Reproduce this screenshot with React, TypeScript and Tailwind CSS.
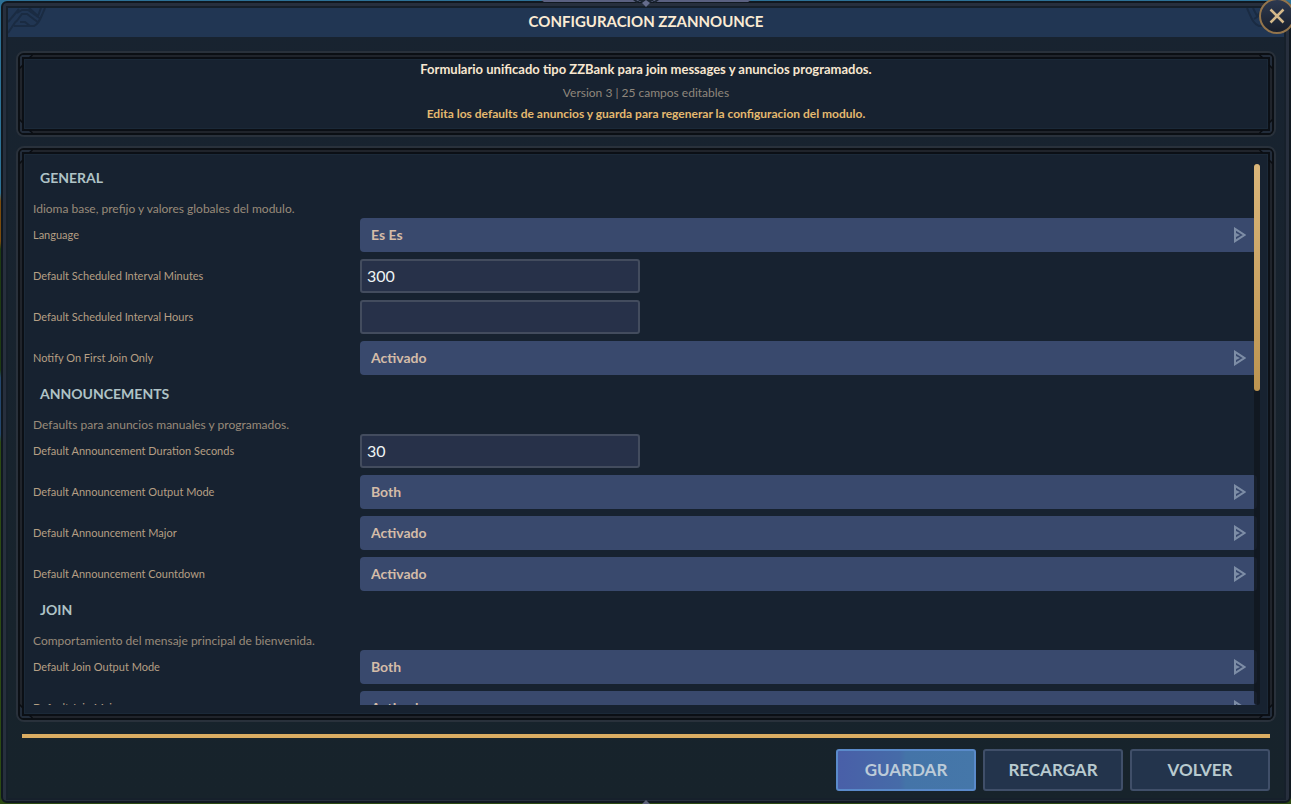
import React, { useId, useRef, useState } from 'react';

type Field = {
  label: string;
  kind: 'select' | 'text';
  value: string;
};

type Section = {
  title: string;
  description: string;
  fields: Field[];
};

const sections: Section[] = [
  {
    title: 'GENERAL',
    description: 'Idioma base, prefijo y valores globales del modulo.',
    fields: [
      { label: 'Language', kind: 'select', value: 'Es Es' },
      { label: 'Default Scheduled Interval Minutes', kind: 'text', value: '300' },
      { label: 'Default Scheduled Interval Hours', kind: 'text', value: '' },
      { label: 'Notify On First Join Only', kind: 'select', value: 'Activado' },
    ],
  },
  {
    title: 'ANNOUNCEMENTS',
    description: 'Defaults para anuncios manuales y programados.',
    fields: [
      { label: 'Default Announcement Duration Seconds', kind: 'text', value: '30' },
      { label: 'Default Announcement Output Mode', kind: 'select', value: 'Both' },
      { label: 'Default Announcement Major', kind: 'select', value: 'Activado' },
      { label: 'Default Announcement Countdown', kind: 'select', value: 'Activado' },
    ],
  },
  {
    title: 'JOIN',
    description: 'Comportamiento del mensaje principal de bienvenida.',
    fields: [
      { label: 'Default Join Output Mode', kind: 'select', value: 'Both' },
      { label: 'Default Join Major', kind: 'select', value: 'Activado' },
    ],
  },
];

const Corner: React.FC<{ className: string }> = ({ className }) => (
  <svg className={`absolute pointer-events-none ${className}`} width="18" height="18" viewBox="0 0 18 18" fill="none">
    <path d="M2 14V4l2-2h10l-2 2H4v8z" fill="#222c3a" />
    <path d="M1.5 15.5L5 12M11.5 4.5L14.5 2" stroke="#0a0d12" strokeWidth="1.5" />
  </svg>
);

const Panel: React.FC<{ className?: string; children: React.ReactNode }> = ({ className = '', children }) => (
  <div className={`relative flex flex-col rounded-lg border-2 border-[#29313b] ${className}`}>
    <div className="flex min-h-0 flex-1 flex-col rounded-md border-2 border-[#0b0f14] bg-[#20242b] p-[2px]">
      <div className="flex min-h-0 flex-1 flex-col border-2 border-[#0b0f15] bg-[#172230]">
        <div className="flex min-h-0 flex-1 flex-col border border-[#1b2938]">{children}</div>
      </div>
    </div>
    <Corner className="left-0 top-0" />
    <Corner className="right-0 top-0 -scale-x-100" />
    <Corner className="bottom-0 left-0 -scale-y-100" />
    <Corner className="bottom-0 right-0 -scale-100" />
  </div>
);

const ArrowIcon: React.FC = () => (
  <svg className="pointer-events-none absolute right-[11px] top-1/2 -translate-y-1/2" width="13" height="16" viewBox="0 0 13 16" fill="none">
    <path d="M2 1.8v12.4L11.4 8z" stroke="#7d8da6" strokeWidth="2" />
    <path d="M3 6l4 2-4 2z" fill="#7d8da6" />
  </svg>
);

const FieldRow: React.FC<{ field: Field }> = ({ field }) => {
  const id = useId();

  return (
    <div className="mb-[7px] flex items-center">
      <label htmlFor={id} className="w-[327px] shrink-0 text-[11px] text-[#b59f84]">
        {field.label}
      </label>
      {field.kind === 'select' ? (
        <div className="relative flex-1">
          <select
            id={id}
            defaultValue={field.value}
            className="block h-[34px] w-full appearance-none rounded bg-[#39496d] px-[11px] text-sm font-bold text-[#d4bca8] outline-none"
          >
            <option>{field.value}</option>
          </select>
          <ArrowIcon />
        </div>
      ) : (
        <input
          id={id}
          type="text"
          defaultValue={field.value}
          className="block h-[34px] w-[280px] rounded-[3px] border-2 border-[#434c5e] bg-[#273149] px-[5px] pb-[2px] text-base text-[#eef4f4] outline-none"
        />
      )}
    </div>
  );
};

const FooterButton: React.FC<{ primary?: boolean; children: React.ReactNode }> = ({ primary, children }) => (
  <button
    type="button"
    className={`h-[42px] w-[140px] rounded-[3px] border-2 text-[17px] font-bold ${
      primary
        ? 'border-[#5a8aca] bg-[linear-gradient(90deg,#495fa8,#466ba8_45%,#4474a8_50%,#4577a9)] text-[#bccbd8]'
        : 'border-[#404f69] bg-[#23344c] text-[#b8cacf]'
    }`}
  >
    {children}
  </button>
);

export default function App() {
  const listRef = useRef<HTMLDivElement>(null);
  const [progress, setProgress] = useState(0);

  const handleScroll = () => {
    const el = listRef.current;
    if (!el) {
      return;
    }
    const max = el.scrollHeight - el.clientHeight;
    setProgress(max > 0 ? el.scrollTop / max : 0);
  };

  return (
    <div className="relative h-screen overflow-hidden bg-[linear-gradient(#2d7196_0_24%,#7a4a0c_25%_30%,#1d3a12_31%_46%,#23456b_47%_54%,#2c4a12_55%)] py-px pl-px font-[Lato,sans-serif]">
      <div className="flex h-full flex-col rounded-md border-2 border-[#101820] bg-[#272f3d] p-[3px] pb-px">
        <div className="flex min-h-0 flex-1 flex-col border-2 border-[#16202b] bg-linear-to-b from-[#182330] to-[#17232b]">
          <header className="relative flex h-[29px] shrink-0 items-center justify-center bg-[#213653] pb-[2px]">
            <svg className="absolute left-0 top-0" width="40" height="29" viewBox="0 0 40 29" fill="none" stroke="#1a2b42" strokeWidth="2">
              <path d="M0 25L8 13M6 18h20c5-2 7-9 11-18M0 14L11 1M8 14l6-8h5l12 9M12 14h5l5 4M9 5l5-3h6l13 9M21 0l9 8 3-8" />
            </svg>
            <svg className="absolute right-0 top-0" width="40" height="29" viewBox="0 0 40 29" fill="none" stroke="#1a2b42" strokeWidth="2">
              <path d="M3 0c4 9 6 16 12 18h20M9 0l4 8 6-7M10 11l12-8" />
            </svg>
            <h1 className="text-[15px] font-bold text-[#fbebd3]">CONFIGURACION ZZANNOUNCE</h1>
          </header>

          <main className="flex min-h-0 flex-1 flex-col px-2 pt-[14px]">
            <Panel className="h-[86px] shrink-0 text-center">
              <p className="text-[13px] leading-[18px] font-bold text-[#f8e7d0]">
                Formulario unificado tipo ZZBank para join messages y anuncios programados.
              </p>
              <p className="mt-[6px] text-xs leading-[18px] text-[#8f877c]">Version 3 | 25 campos editables</p>
              <p className="mt-[3px] text-xs leading-[18px] font-bold text-[#e4b96f]">
                Edita los defaults de anuncios y guarda para regenerar la configuracion del modulo.
              </p>
            </Panel>

            <Panel className="mt-[9px] min-h-0 flex-1">
              <div className="relative mb-2 mt-[9px] mr-[7px] ml-2 min-h-0 flex-1">
                <div ref={listRef} onScroll={handleScroll} className="h-full overflow-y-auto pt-[2px] pr-[3px] [scrollbar-width:none]">
                  {sections.map((section) => (
                    <section key={section.title}>
                      <h2 className="pl-[7px] text-sm leading-6 font-bold text-[#afc3c6]">{section.title}</h2>
                      <p className="mt-[10px] text-xs leading-[18px] text-[#998b7a]">{section.description}</p>
                      {section.fields.map((field) => (
                        <FieldRow key={field.label} field={field} />
                      ))}
                    </section>
                  ))}
                </div>
                <div className="absolute inset-y-0 right-0 w-[6px] rounded-b bg-[#10161f]/85">
                  <div
                    className="relative h-[42%] rounded-full bg-linear-to-b from-[#dab67a] to-[#bd9450]"
                    style={{ top: `${progress * 58}%` }}
                  />
                </div>
              </div>
            </Panel>
          </main>

          <footer className="px-[14px] pt-3 pb-[7px]">
            <div className="h-1 bg-[#daac62]" />
            <div className="mt-[11px] flex justify-end gap-[7px]">
              <FooterButton primary>GUARDAR</FooterButton>
              <FooterButton>RECARGAR</FooterButton>
              <FooterButton>VOLVER</FooterButton>
            </div>
          </footer>
        </div>
      </div>

      {/* frame ornaments over the top and bottom edges */}
      <svg className="absolute left-1/2 top-0 -translate-x-1/2" width="214" height="8" viewBox="0 0 214 8">
        <path d="M2 0h210l-3 2H5z" fill="#5a6080" />
        <path d="M94 0h26l-4 3-3-2-6 6-6-6-3 2z" fill="#1b2532" />
        <path d="M107 0l4 3-4 4-4-4z" fill="#656c8c" />
        <path d="M97 0h3l-1 1zM114 0h3l-2 1z" fill="#656c8c" />
      </svg>
      <svg className="absolute bottom-0 left-1/2 -translate-x-1/2" width="8" height="4" viewBox="0 0 8 4">
        <path d="M4 0l4 4H0z" fill="#5c6178" />
      </svg>

      <button type="button" aria-label="Cerrar" className="absolute -right-1 -top-[2px] flex size-9 items-center justify-center rounded-full border-2 border-[#93744b] bg-linear-to-b from-[#2d3950] to-[#191f2c]">
        <svg width="16" height="16" viewBox="0 0 16 16" fill="none" stroke="#d5b98a" strokeWidth="2.5">
          <path d="M1.5 1.5l13 13M14.5 1.5l-13 13" />
        </svg>
      </button>
    </div>
  );
}
